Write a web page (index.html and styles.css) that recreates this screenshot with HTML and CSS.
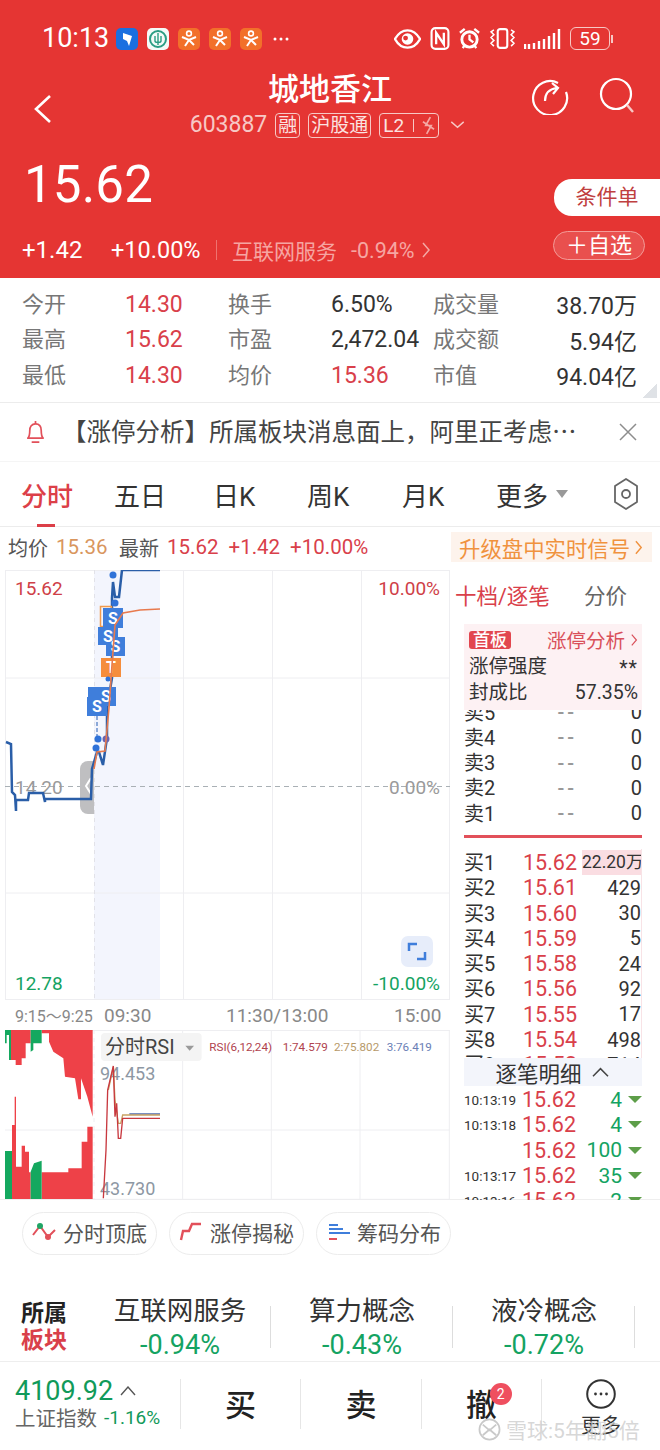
FILE: index.html
```html
<!DOCTYPE html>
<html lang="zh-CN">
<head>
<meta charset="utf-8">
<title>城地香江</title>
<link rel="stylesheet" href="styles.css">
</head>
<body>
<div class="page">
  <header class="header">
    <div class="status">
      <span class="status-time">10:13</span>
      <div class="status-apps">
        <svg class="app" viewBox="0 0 22 22"><rect width="22" height="22" rx="5" fill="#1a6fe0"/><path d="M7 5l9 3-3 10-2-5-4-2z" fill="#fff"/></svg>
        <svg class="app" viewBox="0 0 22 22"><rect width="22" height="22" rx="5" fill="#f4fbf8"/><circle cx="11" cy="11" r="8" fill="none" stroke="#2a9d83" stroke-width="2"/><path d="M11 5v12M8 8v5c0 2 6 2 6 0V8" fill="none" stroke="#2a9d83" stroke-width="1.4"/></svg>
        <svg class="app" viewBox="0 0 22 22"><rect width="22" height="22" rx="5" fill="#f2702a"/><circle cx="11" cy="5.5" r="2.4" fill="none" stroke="#fff" stroke-width="1.6"/><path d="M4 9l7 3 7-3M11 12l-4 6M11 12l5 5" fill="none" stroke="#fff" stroke-width="2"/></svg>
        <svg class="app" viewBox="0 0 22 22"><rect width="22" height="22" rx="5" fill="#f2702a"/><circle cx="11" cy="5.5" r="2.4" fill="none" stroke="#fff" stroke-width="1.6"/><path d="M4 9l7 3 7-3M11 12l-4 6M11 12l5 5" fill="none" stroke="#fff" stroke-width="2"/></svg>
        <svg class="app" viewBox="0 0 22 22"><rect width="22" height="22" rx="5" fill="#f2702a"/><circle cx="11" cy="5.5" r="2.4" fill="none" stroke="#fff" stroke-width="1.6"/><path d="M4 9l7 3 7-3M11 12l-4 6M11 12l5 5" fill="none" stroke="#fff" stroke-width="2"/></svg>
        <svg class="app-more" viewBox="0 0 16 4"><circle cx="2" cy="2" r="1.5" fill="#fff"/><circle cx="8" cy="2" r="1.5" fill="#fff"/><circle cx="14" cy="2" r="1.5" fill="#fff"/></svg>
      </div>
      <div class="status-sys">
        <svg class="sys-eye" viewBox="0 0 28 20"><path d="M1 10C5 3 10 1 14 1s9 2 13 9c-4 7-9 9-13 9S5 17 1 10z" fill="none" stroke="#fff" stroke-width="2.4"/><circle cx="14" cy="10" r="6" fill="#fff"/><circle cx="12" cy="9" r="2.5" fill="#e53533"/></svg>
        <svg class="sys-nfc" viewBox="0 0 20 24"><rect x="1.2" y="1.2" width="17.6" height="21.6" rx="4" fill="none" stroke="#fff" stroke-width="2.2"/><path d="M6 18V6l8 12V6" fill="none" stroke="#fff" stroke-width="2.4"/></svg>
        <svg class="sys-alarm" viewBox="0 0 24 24"><circle cx="12" cy="13" r="8" fill="none" stroke="#fff" stroke-width="3"/><path d="M12 8v5l4 3M2 6l5-4M22 6l-5-4M5 22l2-3M19 22l-2-3" fill="none" stroke="#fff" stroke-width="2.4"/></svg>
        <svg class="sys-vib" viewBox="0 0 28 22"><rect x="9" y="1.2" width="10" height="19.6" rx="2.5" fill="none" stroke="#fff" stroke-width="2.2"/><path d="M5 2l-3 2 3 3-3 3 3 3-3 3 3 3M23 2l3 2-3 3 3 3-3 3 3 3-3 3" fill="none" stroke="#fff" stroke-width="1.6"/></svg>
        <svg class="sys-signal" viewBox="0 0 37 22"><path d="M1 16v5M5 16v5M10 15v6M15 13v8M20 11v10M25 8v13M30 5v16M35 1v20" stroke="#fff" stroke-width="2.4" fill="none"/></svg>
        <div class="battery"><span class="battery-level">59</span></div>
        <span class="battery-cap"></span>
      </div>
    </div>
    <div class="nav">
      <svg class="nav-back" viewBox="0 0 20 30"><path d="M17 2L3 15l14 13" fill="none" stroke="#fff" stroke-width="2.6"/></svg>
      <div class="nav-title">
        <h1 class="stock-name">城地香江</h1>
        <div class="stock-meta">
          <span class="stock-code">603887</span>
          <span class="tag">融</span>
          <span class="tag">沪股通</span>
          <span class="tag tag-l2">L2<i class="tag-sep"></i><svg class="tag-bolt" viewBox="0 0 14 20"><path d="M9 1L4 10h6l-5 9M1 6l12 8" fill="none" stroke="#f4a8a4" stroke-width="1.8"/></svg></span>
          <svg class="meta-caret" viewBox="0 0 16 9"><path d="M1 1l7 6 7-6" fill="none" stroke="#f7c8c5" stroke-width="1.6"/></svg>
        </div>
      </div>
      <div class="nav-actions">
        <svg class="nav-icon" viewBox="0 0 38 38"><path d="M27 6A17 17 0 1 0 35 15" fill="none" stroke="#fff" stroke-width="2.2"/><path d="M14 24c0-8 4-12 12-13M21 6l6 5-5 6" fill="none" stroke="#fff" stroke-width="2.2"/></svg>
        <svg class="nav-icon" viewBox="0 0 38 38"><circle cx="18" cy="17" r="15" fill="none" stroke="#fff" stroke-width="2.2"/><path d="M29 28l6 7" stroke="#f7c8c5" stroke-width="2.4"/></svg>
      </div>
    </div>
    <div class="quote">
      <div class="quote-main">
        <div class="quote-price">15.62</div>
        <div class="quote-change">
          <span class="change-abs">+1.42</span>
          <span class="change-pct">+10.00%</span>
          <i class="change-sep"></i>
          <span class="change-sector">互联网服务</span>
          <span class="change-sector-pct">-0.94%</span>
          <svg class="change-arrow" viewBox="0 0 9 16"><path d="M1 1l6 7-6 7" fill="none" stroke="#f4a8a4" stroke-width="1.5"/></svg>
        </div>
      </div>
      <div class="quote-actions">
        <button class="btn-order">条件单</button>
        <button class="btn-watch">＋自选</button>
      </div>
    </div>
  </header>

  <section class="stats">
    <span class="stat-label">今开</span><span class="stat-value up">14.30</span>
    <span class="stat-label">换手</span><span class="stat-value">6.50%</span>
    <span class="stat-label">成交量</span><span class="stat-value end">38.70万</span>
    <span class="stat-label">最高</span><span class="stat-value up">15.62</span>
    <span class="stat-label">市盈</span><span class="stat-value">2,472.04</span>
    <span class="stat-label">成交额</span><span class="stat-value end">5.94亿</span>
    <span class="stat-label">最低</span><span class="stat-value up">14.30</span>
    <span class="stat-label">均价</span><span class="stat-value up">15.36</span>
    <span class="stat-label">市值</span><span class="stat-value end">94.04亿</span>
    <i class="stats-corner"></i>
  </section>

  <section class="notice">
    <svg class="notice-bell" viewBox="0 0 22 26"><path d="M3 19c2-2 2-4 2-8 0-4 2-7 6-7s6 3 6 7c0 4 0 6 2 8z" fill="none" stroke="#e2505a" stroke-width="1.8" stroke-linejoin="round"/><path d="M11 1v3M7 23h8" stroke="#e2505a" stroke-width="1.8"/></svg>
    <p class="notice-text">【涨停分析】所属板块消息面上，阿里正考虑…</p>
    <svg class="notice-close" viewBox="0 0 18 18"><path d="M1 1l16 16M17 1L1 17" stroke="#8d8d8d" stroke-width="1.5"/></svg>
  </section>

  <nav class="tabs">
    <span class="tab tab-active">分时</span>
    <span class="tab">五日</span>
    <span class="tab">日K</span>
    <span class="tab">周K</span>
    <span class="tab">月K</span>
    <span class="tab tab-more">更多<i class="tab-caret"></i></span>
    <svg class="tab-gear" viewBox="0 0 26 32"><path d="M13 1l11 7v16l-11 7-11-7V8z" fill="none" stroke="#666" stroke-width="1.8" stroke-linejoin="round"/><circle cx="13" cy="16" r="4" fill="none" stroke="#666" stroke-width="1.8"/></svg>
  </nav>

  <div class="infobar">
    <span class="info-label">均价</span><span class="info-avg">15.36</span>
    <span class="info-label info-latest">最新</span><span class="info-up">15.62</span><span class="info-up">+1.42</span><span class="info-up">+10.00%</span>
    <span class="upgrade">升级盘中实时信号<svg class="upgrade-arrow" viewBox="0 0 9 16"><path d="M1 1l6 7-6 7" fill="none" stroke="#f0923e" stroke-width="1.6"/></svg></span>
  </div>

  <main class="market">
    <div class="charts">
      <svg class="price-chart" viewBox="0 570 450 430">
        <rect x="94" y="570" width="66" height="430" fill="#f3f5fd"/>
        <g stroke="#eeeef1" stroke-width="1" fill="none">
          <rect x="5.5" y="570.5" width="444" height="429"/>
          <path d="M5 678h445M5 893h445M183.5 570v430M272.5 570v430M361.5 570v430"/>
          <path d="M94.5 570v430" stroke-dasharray="4 4" stroke="#e2e2e8"/>
        </g>
        <path d="M5 786.5h445" stroke="#a9b0b5" stroke-width="1" stroke-dasharray="5 4"/>
        <path d="M94 761h-6a8 8 0 0 0-8 8v37a8 8 0 0 0 8 8h6z" fill="#bfbfc1"/>
        <path d="M91 778l-5 8 5 8" fill="none" stroke="#fff" stroke-width="2"/>
        <g font-size="19">
          <text x="15" y="595" fill="#cf3f48">15.62</text>
          <text x="440" y="595" fill="#cf3f48" text-anchor="end">10.00%</text>
          <text x="15" y="794" fill="#9a9a9a">14.20</text>
          <text x="440" y="794" fill="#9a9a9a" text-anchor="end">0.00%</text>
          <text x="15" y="990" fill="#14a362">12.78</text>
          <text x="440" y="990" fill="#14a362" text-anchor="end">-10.00%</text>
        </g>
        <path d="M6 742l5 2 1 48 3 3 1 16v-11h12l1-7h14l2 9v-3h46l1-30 5-17 2 0 4 13 4-27v-30l5-30v-80l1-16 2 15h4l3-27h38" fill="none" stroke="#2a5ea8" stroke-width="2.5"/>
        <rect x="100.500" y="606.500" width="11" height="20" fill="none" stroke="#f29a4a" stroke-width="1.500"/>
        <g fill="#3f7edb">
          <rect x="98" y="627" width="20" height="18"/>
          <rect x="103" y="608" width="20" height="20"/>
          <rect x="106" y="637" width="19" height="19"/>
          <rect x="87" y="697" width="20" height="19"/>
          <rect x="88" y="687" width="20" height="19"/>
          <rect x="97" y="687" width="19" height="19"/>
        </g>
        <rect x="101" y="658" width="20" height="19" fill="#f58d3c"/>
        <path d="M97 716v23" stroke="#8ca9d8" stroke-width="2" stroke-dasharray="4 2"/>
        <g font-size="16" font-weight="700" fill="#fff" text-anchor="middle">
          <text x="108" y="642">S</text>
          <text x="113" y="624">S</text>
          <text x="115.500" y="652">S</text>
          <text x="111" y="673">T</text>
          <text x="97" y="712">S</text>
          <text x="106" y="702">S</text>
        </g>
        <g fill="#2f72d8">
          <circle cx="113" cy="575" r="3.500"/>
          <circle cx="115" cy="603" r="3.500"/>
          <circle cx="98" cy="739" r="3.500"/>
          <circle cx="106" cy="739" r="3.500" fill="#6a64b0"/>
          <circle cx="96" cy="748" r="3.500"/>
          <circle cx="108" cy="679" r="2.500"/>
        </g>
        <path d="M94 769l3-17 8-1 4-43 3-43 3-40 8-12 17-3 20-1" fill="none" stroke="#e87a4e" stroke-width="1.600"/>
        <rect x="401" y="936" width="32" height="31" rx="7" fill="#e7edfa"/>
        <path d="M409 951v-7h8M425 952v7h-8" fill="none" stroke="#3f7edb" stroke-width="2.500"/>
      </svg>
      <div class="axis">
        <span class="axis-pre">9:15～9:25</span>
        <span class="axis-open">09:30</span>
        <span class="axis-mid">11:30/13:00</span>
        <span class="axis-close">15:00</span>
      </div>
      <svg class="rsi-chart" viewBox="0 90 1350 510">
        <g stroke="#eeeef1" stroke-width="3" fill="none">
          <path d="M15 91.500h1335M15 390h1335M15 598h1335M548 90v510M814 90v510M1080 90v510M1348 90v510"/>
          <path d="M282 90v510" stroke-dasharray="12 12"/>
        </g>
        <path d="M33 90V180H47V195H65V175H77V130H92V90zM125 90V100H147V125L160 155L190 175L195 230L225 235L235 298H243V235L262 290L270 320L278 350V90z" fill="#ee4148"/>
        <path d="M15 90V130H20V105H27V180H33V90zM92 90V155L100 150V130H125V90z" fill="#14a85f"/>
        <path d="M36 597V375H44V290H48V500H65V437H75V455H87V517L92 517V597zM125 597V517H205V505H245V425H262V380H278V597z" fill="#ee4148"/>
        <path d="M15 597V453H36V597zM92 597V515L102 490L125 482V597z" fill="#14a85f"/>
        <rect x="303" y="99" width="302" height="84" rx="12" fill="#f4f4f4"/>
        <text x="315" y="162" font-size="60" fill="#444">分时RSI</text>
        <path d="M556 137h26l-13 15z" fill="#9a9a9a"/>
        <g font-size="35">
          <text x="628" y="153" fill="#b0434e">RSI(6,12,24)</text>
          <text x="848" y="153" fill="#b0434e">1:74.579</text>
          <text x="1002" y="153" fill="#b79a6a">2:75.802</text>
          <text x="1160" y="153" fill="#6b80b5">3:76.419</text>
        </g>
        <g font-size="54" fill="#8d97a3">
          <text x="300" y="241">94.453</text>
          <text x="300" y="586">43.730</text>
        </g>
        <path d="M388 342h92" stroke="#7b8fc0" stroke-width="6" fill="none"/>
        <path d="M325 270l15-70 5 100 10 70h7l6-25h112" stroke="#c9a263" stroke-width="4" fill="none"/>
        <path d="M310 595l8-145 5-180 17-72 5 152 5-40 5 105h7l6-60h112" stroke="#c8383f" stroke-width="4" fill="none"/>
      </svg>
    </div>

    <aside class="book">
      <div class="book-tabs">
        <span class="book-tab-active">十档/逐笔</span>
        <span class="book-tab">分价</span>
      </div>
      <div class="limit-card">
        <div class="limit-head">
          <span class="limit-badge">首板</span>
          <span class="limit-link">涨停分析<svg class="limit-arrow" viewBox="0 0 9 16"><path d="M1 1l6 7-6 7" fill="none" stroke="#d9505a" stroke-width="1.500"/></svg></span>
        </div>
        <div class="limit-row"><span>涨停强度</span><span class="limit-stars">**</span></div>
        <div class="limit-row"><span>封成比</span><span>57.35%</span></div>
      </div>
      <div class="sells">
        <div class="level"><span>卖5</span><span class="level-none">--</span><span class="level-qty">0</span></div>
        <div class="level"><span>卖4</span><span class="level-none">--</span><span class="level-qty">0</span></div>
        <div class="level"><span>卖3</span><span class="level-none">--</span><span class="level-qty">0</span></div>
        <div class="level"><span>卖2</span><span class="level-none">--</span><span class="level-qty">0</span></div>
        <div class="level"><span>卖1</span><span class="level-none">--</span><span class="level-qty">0</span></div>
      </div>
      <div class="book-divider"></div>
      <div class="buys">
        <div class="level"><span>买1</span><span class="level-price">15.62</span><span class="level-qty level-hot">22.20万</span></div>
        <div class="level"><span>买2</span><span class="level-price">15.61</span><span class="level-qty">429</span></div>
        <div class="level"><span>买3</span><span class="level-price">15.60</span><span class="level-qty">30</span></div>
        <div class="level"><span>买4</span><span class="level-price">15.59</span><span class="level-qty">5</span></div>
        <div class="level"><span>买5</span><span class="level-price">15.58</span><span class="level-qty">24</span></div>
        <div class="level"><span>买6</span><span class="level-price">15.56</span><span class="level-qty">92</span></div>
        <div class="level"><span>买7</span><span class="level-price">15.55</span><span class="level-qty">17</span></div>
        <div class="level"><span>买8</span><span class="level-price">15.54</span><span class="level-qty">498</span></div>
        <div class="level"><span>买9</span><span class="level-price">15.53</span><span class="level-qty">714</span></div>
      </div>
      <div class="ticks-head">逐笔明细<svg class="ticks-caret" viewBox="0 0 20 12"><path d="M1 11l9-9 9 9" fill="none" stroke="#444" stroke-width="1.800"/></svg></div>
      <div class="ticks">
        <div class="tick"><span class="tick-time">10:13:19</span><span class="tick-price">15.62</span><span class="tick-qty">4</span><i class="tick-down"></i></div>
        <div class="tick"><span class="tick-time">10:13:18</span><span class="tick-price">15.62</span><span class="tick-qty">4</span><i class="tick-down"></i></div>
        <div class="tick"><span class="tick-time"></span><span class="tick-price">15.62</span><span class="tick-qty">100</span><i class="tick-down"></i></div>
        <div class="tick"><span class="tick-time">10:13:17</span><span class="tick-price">15.62</span><span class="tick-qty">35</span><i class="tick-down"></i></div>
        <div class="tick"><span class="tick-time">10:13:16</span><span class="tick-price">15.62</span><span class="tick-qty">2</span><i class="tick-down"></i></div>
      </div>
    </aside>
  </main>

  <section class="chips">
    <span class="chip"><svg class="chip-icon" viewBox="0 0 24 20"><path d="M1 13L8 4l8 11 7-7" fill="none" stroke="#e2505a" stroke-width="2"/><circle cx="8" cy="4" r="3" fill="#1fa565"/><circle cx="16" cy="15" r="3" fill="#e2505a"/></svg>分时顶底</span>
    <span class="chip"><svg class="chip-icon" viewBox="0 0 24 20"><path d="M2 18l2-9h6l3-7h9" fill="none" stroke="#e2505a" stroke-width="2.400"/></svg>涨停揭秘</span>
    <span class="chip"><svg class="chip-icon" viewBox="0 0 24 20"><path d="M3 3h9M3 7h14" stroke="#3f7edb" stroke-width="2" fill="none"/><path d="M3 11h21" stroke="#3f7edb" stroke-width="2" fill="none"/><path d="M3 17h8" stroke="#e2505a" stroke-width="2" fill="none"/></svg>筹码分布</span>
  </section>

  <section class="sectors">
    <div class="sectors-title"><span>所属</span><span class="sectors-accent">板块</span></div>
    <div class="sector"><span class="sector-name">互联网服务</span><span class="sector-pct">-0.94%</span></div>
    <div class="sector"><span class="sector-name">算力概念</span><span class="sector-pct">-0.43%</span></div>
    <div class="sector"><span class="sector-name">液冷概念</span><span class="sector-pct">-0.72%</span></div>
  </section>

  <footer class="bottom">
    <div class="index">
      <div class="index-top"><span class="index-value">4109.92</span><svg class="index-caret" viewBox="0 0 16 10"><path d="M1 9l7-8 7 8" fill="none" stroke="#555" stroke-width="1.400"/></svg></div>
      <div class="index-sub"><span class="index-name">上证指数</span><span class="index-pct">-1.16%</span></div>
    </div>
    <button class="action">买</button>
    <button class="action">卖</button>
    <button class="action action-badge">撤<span class="badge">2</span></button>
    <div class="action-more">
      <svg class="more-icon" viewBox="0 0 30 30"><circle cx="15" cy="15" r="13.800" fill="none" stroke="#333" stroke-width="2"/><circle cx="9.500" cy="15" r="1.400" fill="#333"/><circle cx="15" cy="15" r="1.400" fill="#333"/><circle cx="20.500" cy="15" r="1.400" fill="#333"/></svg>
      <span class="more-label">更多</span>
    </div>
    <div class="watermark">
      <svg class="watermark-logo" viewBox="0 0 24 24"><circle cx="12" cy="12" r="10.500" fill="none" stroke="#c9c9c9" stroke-width="1.800"/><path d="M5 7l7 6 7-6M5 18l7-6 7 6" fill="none" stroke="#c9c9c9" stroke-width="1.800"/></svg>
      <span>雪球:5年翻5倍</span>
    </div>
  </footer>
</div>
</body>
</html>
```
FILE: styles.css
```css
* { box-sizing: border-box; }
html, body { margin: 0; padding: 0; }
body {
  background: #fff;
  color: #333;
  font-family: Roboto, "Noto Sans CJK SC", sans-serif;
}
button { font: inherit; border: 0; background: none; padding: 0; color: inherit; }
i { display: block; font-style: normal; }
svg { display: block; flex: none; }

.page { width: 660px; height: 1450px; overflow: hidden; position: relative; }

/* header */
.header { height: 278px; background: #e53533; color: #fff; padding-top: 27px; }
.status { display: flex; align-items: center; height: 23px; padding-left: 42px; }
.status-time { width: 74px; font-size: 27px; line-height: 23px; }
.status-apps { display: flex; align-items: center; gap: 9px; width: 280px; }
.app { width: 22px; height: 22px; }
.app-more { width: 16px; height: 4px; margin-left: 2px; }
.status-sys { display: flex; align-items: center; margin-left: -2px; }
.sys-eye { width: 27px; height: 20px; }
.sys-nfc { width: 20px; height: 23px; margin-left: 9px; }
.sys-alarm { width: 23px; height: 23px; margin-left: 8px; }
.sys-vib { width: 27px; height: 21px; margin-left: 8px; }
.sys-signal { width: 37px; height: 22px; margin-left: 8px; }
.battery { width: 40px; height: 23px; margin-left: 9px; border: 1.5px solid #f7c8c5; border-radius: 6px; display: flex; align-items: center; justify-content: center; }
.battery-level { font-size: 19px; line-height: 20px; }
.battery-cap { width: 2px; height: 8px; background: #f7c8c5; margin-left: 1px; }

.nav { position: relative; display: flex; justify-content: center; height: 82px; margin-top: 21px; }
.nav-back { position: absolute; left: 33px; top: 23px; width: 20px; height: 30px; }
.nav-title { display: flex; flex-direction: column; align-items: center; }
.stock-name { margin: 0; font-size: 31px; font-weight: 500; line-height: 38px; }
.stock-meta { display: flex; align-items: center; gap: 8px; height: 26px; margin: 3px 5px 0 0; color: #f7c8c5; }
.stock-code { font-size: 23px; line-height: 26px; }
.tag { display: flex; align-items: center; justify-content: center; height: 25px; min-width: 25px; padding: 0 2px; border: 1px solid #f7c8c5; border-radius: 4px; font-size: 19px; line-height: 23px; color: #fbe3e1; }
.tag-l2 { padding: 0 3px; width: 60px; }
.tag-sep { width: 1px; height: 13px; background: #f7c8c5; margin: 0 8px 0 9px; }
.tag-bolt { width: 13px; height: 19px; }
.meta-caret { width: 15px; height: 8px; margin-left: 3px; }
.nav-actions { position: absolute; left: 531px; top: 6px; display: flex; gap: 29px; }
.nav-icon { width: 38px; height: 38px; }

.quote { display: flex; justify-content: space-between; margin-top: 1px; padding-left: 22px; }
.quote-main { padding-top: 1px; }
.quote-price { font-size: 51px; line-height: 60px; padding-left: 2px; letter-spacing: .2px; }
.quote-change { display: flex; align-items: center; height: 32px; margin-top: 19px; }
.change-abs { font-size: 24px; width: 89px; }
.change-pct { font-size: 23.500px; width: 105px; }
.change-sep { width: 1px; height: 20px; background: #ee7370; margin-right: 15px; }
.change-sector { font-size: 21px; color: #f6a5a2; width: 119px; }
.change-sector-pct { font-size: 21.500px; color: #f6a5a2; width: 71px; }
.change-arrow { width: 9px; height: 16px; }
.quote-actions { display: flex; flex-direction: column; align-items: flex-end; gap: 15px; padding-top: 25px; }
.btn-order { width: 106px; height: 37px; background: #fff; border-radius: 18px 0 0 18px; color: #bf4040; font-size: 21px; line-height: 37px; }
.btn-watch { width: 92px; height: 29px; margin-right: 15px; border: 1px solid #f39c98; border-radius: 15px; background: #e9504e; color: #fff; font-size: 22px; line-height: 27px; white-space: nowrap; }

/* stats */
.stats {
  position: relative;
  height: 125px;
  padding: 8px 23px 0 22px;
  border-bottom: 1px solid #ececec;
  display: grid;
  grid-template-columns: 103px 103px 103px 102px 100px 1fr;
  grid-auto-rows: 35.500px;
  align-items: center;
}
.stat-label { font-size: 22px; color: #777; margin-top: -4px; }
.stat-value { font-size: 23px; color: #333; white-space: nowrap; margin-top: 1px; }
.stat-value.up { color: #d9404a; }
.stat-value.end { text-align: right; }
.stats-corner { position: absolute; right: 3px; bottom: 4px; width: 14px; height: 14px; background: linear-gradient(135deg, transparent 50%, #dfe2e6 50%); }

/* notice */
.notice { display: flex; align-items: center; height: 59px; padding: 0 23px 0 25px; border-bottom: 1px solid #f5f5f5; }
.notice-bell { width: 21px; height: 25px; }
.notice-text { margin: 0 0 4px 16px; font-family: "Noto Sans CJK SC", sans-serif; font-size: 24.500px; color: #444; white-space: nowrap; }
.notice-close { width: 18px; height: 18px; margin-left: auto; }

/* tabs */
.tabs { position: relative; display: grid; grid-template-columns: 93px 99px 94px 95px 94px 117px 26px; align-items: center; height: 65px; padding-left: 21px; border-bottom: 1px solid #ececec; }
.tab { font-size: 26px; color: #333; white-space: nowrap; }
.tab-active { color: #dc3f48; font-weight: 500; }
.tab-active::after { content: ""; position: absolute; left: 37px; bottom: -1px; width: 18px; height: 3px; background: #dc3f48; }
.tab-more { display: flex; align-items: center; }
.tab-caret { margin-left: 8px; border: 6px solid transparent; border-top: 8px solid #999; border-bottom: 0; }
.tab-gear { width: 26px; height: 32px; }

/* info bar */
.infobar { display: flex; align-items: center; height: 40px; padding: 0 8px; font-size: 20px; white-space: nowrap; }
.info-label { color: #555; width: 48px; }
.info-avg { color: #d9965e; width: 63px; font-size: 20.500px; }
.info-latest { width: 48px; }
.info-up { color: #d9404a; margin-right: 10px; font-size: 20.500px; }
.upgrade { display: flex; align-items: center; gap: 5px; width: 201px; height: 30px; margin-left: auto; padding-left: 8px; background: #fdf3ec; color: #f0923e; font-size: 21.400px; }
.upgrade-arrow { width: 8px; height: 15px; }

/* market */
.market { display: flex; height: 633px; border-bottom: 1px solid #eee; }
.charts { width: 450px; padding-top: 3px; }
.price-chart { width: 450px; height: 430px; }
.axis { position: relative; height: 30px; display: flex; align-items: center; color: #888; font-size: 19px; white-space: nowrap; padding-left: 15px; }
.axis-pre { font-size: 16px; width: 89px; }
.axis-open { width: 122px; }
.axis-mid { width: 168px; }
.rsi-chart { width: 450px; height: 170px; }

/* book */
.book { width: 210px; padding: 3px 18px 0 14px; }
.book-tabs { display: flex; height: 54px; padding-bottom: 5px; align-items: center; margin-left: -9px; font-size: 21.500px; white-space: nowrap; }
.book-tab-active { color: #d9404a; width: 129px; }
.book-tab { color: #666; }
.limit-card { height: 86px; padding: 1px 4px 0 5px; background: #fdf1f3; font-size: 19.500px; color: #333; }
.limit-head { display: flex; justify-content: space-between; align-items: center; height: 29px; }
.limit-badge { width: 42px; height: 18px; line-height: 18px; border-radius: 3px; background: #e2474f; color: #fff; text-align: center; font-size: 17px; font-weight: 500; }
.limit-link { display: flex; align-items: center; gap: 6px; color: #d9505a; font-size: 19.500px; }
.limit-arrow { width: 7px; height: 14px; }
.limit-row { display: flex; justify-content: space-between; height: 25.500px; line-height: 26px; }
.limit-stars { line-height: 30px; letter-spacing: 1px; }
.sells { height: 115px; overflow: hidden; display: flex; flex-direction: column; justify-content: flex-end; }
.book-divider { height: 3px; margin-top: 10px; background: #e2505a; }
.buys { height: 209px; margin-top: 11px; overflow: hidden; border-right: 1px solid #f8e3e6; }
.level { display: grid; grid-template-columns: 59px 54px 1fr; flex: none; align-items: center; height: 25.300px; padding-bottom: 3px; font-size: 20px; white-space: nowrap; color: #333; }
.level > span:first-child { margin-top: -2px; }
.level-none { color: #999; text-align: right; font-size: 20px; letter-spacing: 3px; font-weight: 500; }
.level-price { color: #d9404a; font-size: 21.500px; }
.level-qty { text-align: right; }
.level-hot { background: #fadde2; height: 25px; line-height: 25px; margin-left: 5px; font-size: 17.500px; }
.ticks-head { display: flex; align-items: center; justify-content: center; gap: 10px; height: 28px; padding-right: 2px; background: #f3f5fb; color: #333; font-size: 21.500px; }
.ticks-caret { width: 17px; height: 10px; }
.ticks { height: 113px; margin-top: 1px; overflow: hidden; }
.tick { display: grid; grid-template-columns: 58px 54px 46px 20px; align-items: center; height: 25.300px; white-space: nowrap; }
.tick-time { font-size: 13.500px; color: #333; }
.tick-price { color: #d9404a; font-size: 21.500px; }
.tick-qty { color: #14a362; font-size: 21px; text-align: right; }
.tick-down { justify-self: end; border: 7px solid transparent; border-top: 7px solid #5d9e49; border-bottom: 0; }

/* chips */
.chips { display: flex; gap: 12px; height: 90px; padding: 12px 0 0 22px; }
.chip { display: flex; align-items: center; gap: 7px; width: 135px; height: 43px; padding: 0 0 3px 9px; border: 1px solid #ececec; border-radius: 22px; color: #555; font-size: 21px; white-space: nowrap; }
.chip-icon { width: 24px; height: 20px; }

/* sectors */
.sectors { display: flex; height: 71px; padding-left: 21px; }
.sectors-title { display: flex; flex-direction: column; width: 68px; padding-top: 10px; font-size: 23px; line-height: 27px; font-weight: 700; color: #222; }
.sectors-accent { color: #d9404a; }
.sector { position: relative; display: flex; flex-direction: column; align-items: center; width: 182px; padding-top: 2px; }
.sector::after { content: ""; position: absolute; right: 0; top: 16px; width: 1px; height: 42px; background: #ddd; }
.sector-name { font-size: 26.500px; line-height: 38px; color: #333; white-space: nowrap; }
.sector-pct { font-size: 27px; line-height: 31px; color: #14a362; }

/* bottom bar */
.bottom { position: relative; display: flex; height: 89px; padding-top: 17px; border-top: 1px solid #eee; }
.index { width: 180px; padding-left: 15px; }
.index-top { display: flex; align-items: center; gap: 7px; height: 24px; }
.index-value { font-size: 27px; line-height: 24px; color: #119a5a; }
.index-caret { width: 16px; height: 10px; }
.index-sub { display: flex; align-items: center; gap: 7px; height: 30px; margin-top: -1px; white-space: nowrap; }
.index-name { font-size: 20.500px; color: #666; }
.index-pct { font-size: 19px; color: #119a5a; }
.action { position: relative; width: 120.500px; height: 50px; padding-bottom: 4px; border-left: 1px solid #e6e6e6; font-size: 31px; font-weight: 500; color: #222; }
.badge { position: absolute; left: 68px; top: 4px; width: 22px; height: 22px; border-radius: 50%; background: #ef4f5f; color: #fff; font-size: 14px; font-weight: 400; line-height: 22px; text-align: center; }
.action-more { position: relative; width: 119px; height: 50px; border-left: 1px solid #e6e6e6; display: flex; flex-direction: column; align-items: center; }
.more-icon { width: 30px; height: 30px; }
.more-label { font-size: 20px; line-height: 26px; margin-top: 4px; color: #333; }
.watermark { position: absolute; left: 478px; top: 52px; display: flex; align-items: center; gap: 5px; color: rgba(205, 205, 205, .8); font-size: 21px; white-space: nowrap; }
.watermark-logo { width: 23px; height: 23px; }
```
